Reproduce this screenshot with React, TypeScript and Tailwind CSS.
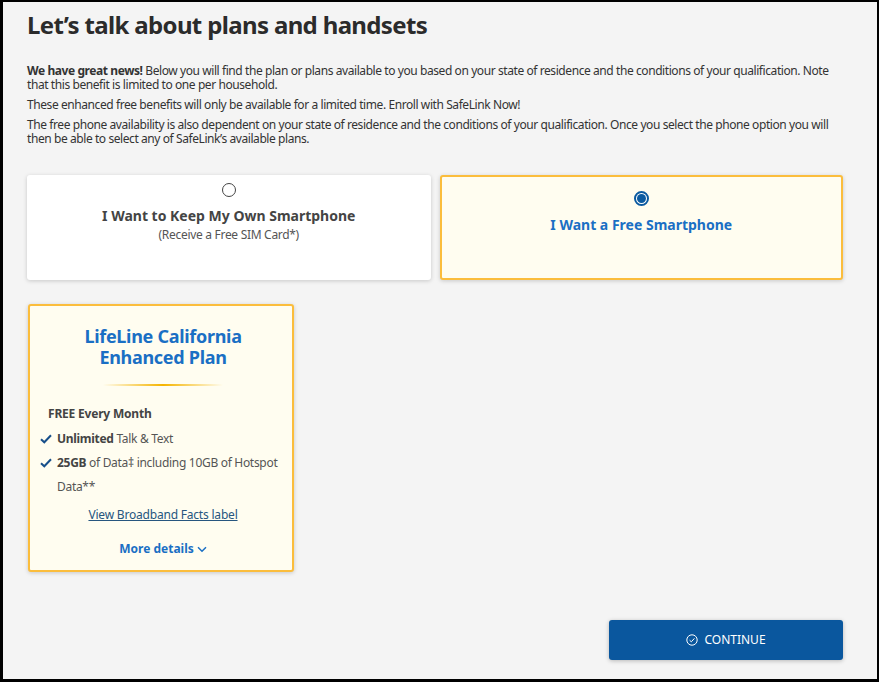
import React from "react";

const font = { fontFamily: '"Noto Sans", "Open Sans", sans-serif' };

function Check() {
  return (
    <svg width="12" height="10" viewBox="0 0 12 10" className="shrink-0">
      <path d="M1 5.2 L4.3 8.3 L11 1.3" fill="none" stroke="#174f8a" strokeWidth="2" />
    </svg>
  );
}

export default function App() {
  return (
    <div className="w-[881px] h-[684px] bg-white" style={font}>
      <div className="w-[879px] h-[682px] border-l-[3px] border-t-2 border-r-2 border-b-[3px] border-black bg-[#f4f4f4] text-[#333] flex flex-col">
        <div className="pl-[24px] pr-[34px] pt-[8px] flex flex-col">
          <h1 className="text-[24px] leading-[30px] font-bold text-[#2b2b2b] tracking-[-0.65px]">Let’s talk about plans and handsets</h1>
          <div className="mt-[24px] text-[12px] leading-[14px] flex flex-col gap-[6px] text-[#333] tracking-[-0.42px]">
            <p><span className="font-bold">We have great news!</span> Below you will find the plan or plans available to you based on your state of residence and the conditions of your qualification. Note that this benefit is limited to one per household.</p>
            <p>These enhanced free benefits will only be available for a limited time. Enroll with SafeLink Now!</p>
            <p>The free phone availability is also dependent on your state of residence and the conditions of your qualification. Once you select the phone option you will then be able to select any of SafeLink’s available plans.</p>
          </div>
          <div className="mt-[29px] grid grid-cols-2 gap-[9px]">
            <div className="h-[105px] bg-white rounded-[3px] shadow-[0_1px_4px_rgba(0,0,0,0.18)] flex flex-col items-center justify-center pb-[30px]">
              <div className="w-[14px] h-[14px] rounded-full border-[1.5px] border-[#444] bg-white" />
              <div className="mt-[10px] text-[14px] leading-[18px] font-bold text-[#444]">I Want to Keep My Own Smartphone</div>
              <div className="mt-[2px] text-[12px] leading-[16px] text-[#555] tracking-[-0.3px]">(Receive a Free SIM Card*)</div>
            </div>
            <div className="h-[105px] bg-[#fffdf0] rounded-[3px] border-2 border-[#fbbd3c] shadow-[0_1px_4px_rgba(0,0,0,0.18)] flex flex-col items-center justify-center pb-[30px]">
              <div className="w-[15px] h-[15px] rounded-full border-[2px] border-[#0b5aa0] bg-white flex items-center justify-center">
                <div className="w-[9px] h-[9px] rounded-full bg-[#0b5aa0]" />
              </div>
              <div className="mt-[10px] text-[14px] leading-[18px] font-bold text-[#1a6fc4]">I Want a Free Smartphone</div>
            </div>
          </div>
          <div className="mt-[24px] w-[266px] ml-[1px] h-[268px] bg-[#fffdf0] rounded-[3px] border-2 border-[#fbbd3c] shadow-[0_1px_4px_rgba(0,0,0,0.18)] flex flex-col pl-[10px] pr-[6px] pt-[20px]">
            <div className="text-[18px] leading-[21px] font-bold text-[#1a6fc4] text-center tracking-[-0.3px]">LifeLine California<br />Enhanced Plan</div>
            <div className="mt-[16px] mx-auto w-[120px] h-[2px] bg-[linear-gradient(90deg,rgba(251,189,60,0),#f5b400_50%,rgba(251,189,60,0))]" />
            <div className="mt-[20px] pl-[8px] text-[12px] leading-[16px] font-bold text-[#444] tracking-[-0.2px]">FREE Every Month</div>
            <div className="mt-[5px] flex flex-col text-[12px] leading-[24px] text-[#555] tracking-[-0.3px]">
              <div className="flex items-start gap-[5px]">
                <span className="mt-[7px]"><Check /></span>
                <span><span className="font-bold text-[#444]">Unlimited</span> Talk &amp; Text</span>
              </div>
              <div className="flex items-start gap-[5px]">
                <span className="mt-[7px]"><Check /></span>
                <span><span className="font-bold text-[#444]">25GB</span> of Data‡ including 10GB of Hotspot Data**</span>
              </div>
            </div>
            <div className="mt-[8px] text-center text-[12px] leading-[16px] tracking-[-0.2px]">
              <span className="underline text-[#27567f]">View Broadband Facts label</span>
            </div>
            <div className="mt-[18px] flex items-center justify-center gap-[3px] text-[12px] leading-[16px] font-bold text-[#1a6fc4]">
              More details
              <svg width="10" height="7" viewBox="0 0 10 7"><path d="M1 1.2 L5 5.2 L9 1.2" fill="none" stroke="#1a6fc4" strokeWidth="1.5" /></svg>
            </div>
          </div>
          <div className="mt-[48px] flex justify-end">
            <button className="w-[234px] h-[40px] bg-[#0a579e] rounded-[3px] shadow-[0_1px_4px_rgba(0,0,0,0.25)] flex items-center justify-center gap-[6px] text-white text-[12px]">
              <svg width="12" height="12" viewBox="0 0 12 12"><circle cx="6" cy="6" r="5.2" fill="none" stroke="white" strokeWidth="1" /><path d="M3.6 6.2 L5.3 7.8 L8.4 4.4" fill="none" stroke="white" strokeWidth="1" /></svg>
              CONTINUE
            </button>
          </div>
        </div>
      </div>
    </div>
  );
}
